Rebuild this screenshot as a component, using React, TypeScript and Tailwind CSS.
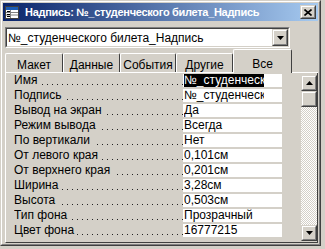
import React from "react";

const rows: [string, string, boolean?][] = [
  ["Имя", "№_студенческого билета_Надпись", true],
  ["Подпись", "№_студенческого билета"],
  ["Вывод на экран", "Да"],
  ["Режим вывода", "Всегда"],
  ["По вертикали", "Нет"],
  ["От левого края", "0,101см"],
  ["От верхнего края", "0,201см"],
  ["Ширина", "3,28см"],
  ["Высота", "0,503см"],
  ["Тип фона", "Прозрачный"],
  ["Цвет фона", "16777215"],
];

const tabs = [
  { name: "Макет", w: "w-[58px]" },
  { name: "Данные", w: "w-[57px]" },
  { name: "События", w: "w-[56px]" },
  { name: "Другие", w: "w-[57px]" },
];

const Raised = ({ className, children }: { className: string; children?: React.ReactNode }) => (
  <div className={"border border-t-[#d4d0c8] border-l-[#d4d0c8] border-r-[#404040] border-b-[#404040] " + className}>
    <div className="w-full h-full border border-t-white border-l-white border-r-[#808080] border-b-[#808080] bg-[#d4d0c8] flex items-center justify-center">
      {children}
    </div>
  </div>
);

const Arrow = ({ up }: { up?: boolean }) => (
  <svg width="7" height="4" viewBox="0 0 7 4">
    <path d={up ? "M3.5 0 L7 4 L0 4 Z" : "M0 0 L7 0 L3.5 4 Z"} fill="#000" />
  </svg>
);

const App: React.FC = () => {
  return (
    <div className="w-[325px] h-[249px] bg-[#d4d0c8] overflow-hidden font-['Liberation_Sans',Arial,sans-serif] text-[12px] text-black">
      <div className="w-[321px] h-[246px] border border-t-[#d4d0c8] border-l-[#d4d0c8] border-r-[#404040] border-b-[#404040]">
        <div className="w-full h-full border border-t-white border-l-white border-r-[#808080] border-b-[#808080] p-[1px] flex flex-col">
          {/* title bar */}
          <div className="h-[18px] flex items-center bg-[linear-gradient(to_right,#0a246a,#a6caf0)] pl-[2px] pr-[2px]">
            <svg width="14" height="13" viewBox="0 0 14 13" className="shrink-0">
              <rect x="0.5" y="0.5" width="13" height="12" fill="#fff" stroke="#404040" />
              <rect x="1" y="1" width="12" height="3" fill="#1c5cb4" />
              <path d="M1 6.5 H13 M1 9 H13 M5.5 4 V12" stroke="#808080" />
              <rect x="2" y="5" width="3" height="1" fill="#000" />
              <rect x="2" y="8" width="3" height="1" fill="#000" />
              <rect x="2" y="10" width="3" height="1" fill="#000" />
            </svg>
            <span className="ml-[6px] text-white font-bold text-[11px] tracking-[-0.3px] leading-[18px] whitespace-nowrap">Надпись: №_студенческого билета_Надпись</span>
            <div className="flex-1" />
            <Raised className="w-[16px] h-[14px]">
              <svg width="8" height="7" viewBox="0 0 8 7">
                <path d="M0.5 0.5 L7.5 6.5 M7.5 0.5 L0.5 6.5" stroke="#000" strokeWidth="1.6" />
              </svg>
            </Raised>
          </div>

          {/* combobox */}
          <div className="mt-[6px] ml-[2px] w-[285px] h-[21px] border border-t-[#808080] border-l-[#808080] border-r-white border-b-white">
            <div className="w-full h-full border border-t-[#404040] border-l-[#404040] border-r-[#d4d0c8] border-b-[#d4d0c8] bg-white flex items-center">
              <span className="pl-[1px] whitespace-nowrap">№_студенческого билета_Надпись</span>
              <div className="flex-1" />
              <Raised className="w-[16px] h-[17px]">
                <Arrow />
              </Raised>
            </div>
          </div>

          {/* tabs */}
          <div className="mt-[1px] ml-[2px] h-[24px] flex items-end">
            {tabs.map((t) => (
              <div key={t.name} className={"flex flex-col " + t.w}>
                <div className="h-[19px] border-t border-l border-t-white border-l-white border-r border-r-[#404040] rounded-t-[2px] flex items-center justify-center pt-[3px]">
                  {t.name}
                </div>
                <div className="h-[1px] bg-white" />
              </div>
            ))}
            <div className="w-[59px] h-[24px] border-t border-l border-t-white border-l-white border-r border-r-[#404040] rounded-t-[2px] flex justify-center pt-[5px]">
              Все
            </div>
            <div className="flex-1 h-[1px] bg-white" />
          </div>

          {/* property list */}
          <div className="ml-[2px] w-[313px] h-[170px] border-l border-l-white border-r border-r-[#404040] border-b border-b-[#404040] flex">
            <div className="pl-[8px] pt-[1px] w-[276px] flex flex-col">
              {rows.map(([label, value, sel]) => (
                <div key={label} className="flex h-[15px]">
                  <div className="w-[169px] h-[13px] leading-[13px] whitespace-nowrap overflow-hidden bg-[linear-gradient(to_right,#222_1px,transparent_1px)] bg-[length:5px_1px] bg-repeat-x bg-[position:3px_10px]">
                    <span className="bg-[#d4d0c8] pr-[3px]">{label}</span>
                  </div>
                  <div className="w-[99px] h-[13px] bg-white leading-[13px] pl-[1px]">
                    <div className="w-[80px] overflow-hidden whitespace-nowrap">
                      <span className={sel ? "bg-black text-white" : ""}>{value}</span>
                    </div>
                  </div>
                </div>
              ))}
            </div>
            <div className="flex-1" />
            <div className="mt-[2px] w-[16px] h-[166px] flex flex-col bg-[repeating-conic-gradient(#fff_0_25%,#d4d0c8_0_50%)] bg-[length:2px_2px]">
              <Raised className="w-[16px] h-[16px]">
                <Arrow up />
              </Raised>
              <Raised className="w-[16px] h-[16px]" />
              <div className="flex-1" />
              <Raised className="w-[16px] h-[16px]">
                <Arrow />
              </Raised>
            </div>
          </div>
        </div>
      </div>
    </div>
  );
};

export default App;
